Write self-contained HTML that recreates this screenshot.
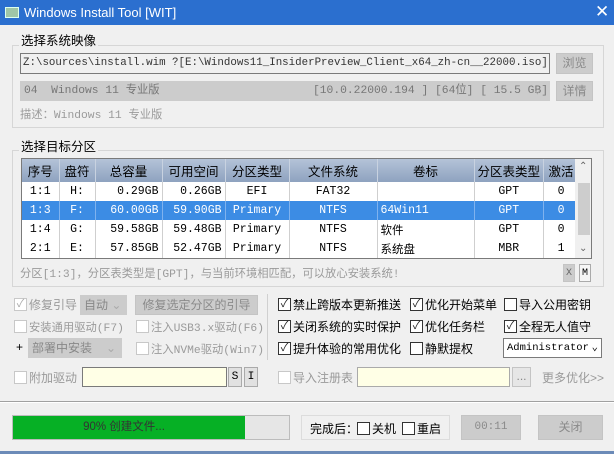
<!DOCTYPE html>
<html><head><meta charset="utf-8"><style>
*{box-sizing:border-box;margin:0;padding:0}
body{width:614px;height:454px;overflow:hidden;background:#f0f0f0;font-family:"Liberation Sans","Noto Sans CJK SC",sans-serif;font-size:12px;color:#000;position:relative}
.a{position:absolute;white-space:nowrap}
.title{left:0;top:0;width:614px;height:25px;background:#2b6fcf;color:#fff;font-size:13px;line-height:25px;padding-left:24px}
.grp{border:1px solid #d6d6d6;}
.lbl{background:#f0f0f0;padding:0 2px;font-size:12.5px}
.mono{font-family:"Liberation Mono","Noto Sans CJK SC",monospace;font-size:11.3px}
.btn{background:#cccccc;border:1px solid #c4c4c4;color:#8a8a8a;text-align:center}
.cb{width:13px;height:13px;border:1px solid #333;background:#fff;font-size:11px;line-height:11px;text-align:center;color:#222}
.cbd{border-color:#c8c8c8;color:#aaa}
.gray{color:#9a9a9a}
table{border-collapse:collapse;font-family:"Liberation Mono","Noto Sans CJK SC",monospace;font-size:11.5px}
td,th{height:19px;border-right:1px solid #cfcfcf;padding:0 3px}
th{height:23px;background:linear-gradient(#b4c3d8,#8ea2bf);font-family:"Liberation Sans","Noto Sans CJK SC",sans-serif;font-weight:normal;font-size:12.5px;border-right:1px solid #c8d2e0}
tr.sel td{background:#3c8ce4;color:#fff;border-right-color:#7fb2ee}
.r{text-align:right}.c{text-align:center}
</style></head><body>
<div class="a title">Windows Install Tool [WIT]</div>
<div class="a" style="left:5px;top:7px;width:14px;height:11px;background:#9fc6a8;border:1px solid #dfe;"></div>
<div class="a" style="left:595px;top:2px;color:#fff;font-size:17px">✕</div>

<div class="a grp" style="left:12px;top:45px;width:592px;height:83px"></div>
<div class="a lbl" style="left:19px;top:30px">选择系统映像</div>
<div class="a mono" style="left:20px;top:53px;width:530px;height:21px;border:1px solid #7a7a7a;background:#f0f0f0;line-height:19px;padding-left:2px;color:#333;font-size:10.8px;overflow:hidden">Z:\sources\install.wim ?[E:\Windows11_InsiderPreview_Client_x64_zh-cn__22000.iso]</div>
<div class="a btn" style="left:556px;top:53px;width:37px;height:21px;line-height:19px">浏览</div>
<div class="a mono" style="left:20px;top:81px;width:530px;height:20px;background:#cccccc;line-height:20px;padding-left:4px;color:#777">04&nbsp; Windows 11 专业版<span style="position:absolute;left:293px">[10.0.22000.194 ] [64位] [ 15.5 GB]</span><span style="position:absolute;left:514px;color:#aaa">⌄</span></div>
<div class="a btn" style="left:556px;top:81px;width:37px;height:20px;line-height:18px">详情</div>
<div class="a mono gray" style="left:20px;top:106px">描述：Windows 11 专业版</div>

<div class="a grp" style="left:12px;top:150px;width:592px;height:137px"></div>
<div class="a lbl" style="left:19px;top:136px">选择目标分区</div>
<div class="a" style="left:21px;top:158px;width:571px;height:101px;border:1px solid #7a7a7a;background:#fff;overflow:hidden">
<table>
<tr><th style="width:37px">序号</th><th style="width:36px">盘符</th><th style="width:67px">总容量</th><th style="width:63px">可用空间</th><th style="width:64px">分区类型</th><th style="width:88px">文件系统</th><th style="width:97px">卷标</th><th style="width:66px">分区表类型</th><th style="width:35px">激活</th></tr>
<tr><td class="c">1:1</td><td class="c">H:</td><td class="r">0.29GB</td><td class="r">0.26GB</td><td class="c">EFI</td><td class="c">FAT32</td><td></td><td class="c">GPT</td><td class="c">0</td></tr>
<tr class="sel"><td class="c">1:3</td><td class="c">F:</td><td class="r">60.00GB</td><td class="r">59.90GB</td><td class="c">Primary</td><td class="c">NTFS</td><td>64Win11</td><td class="c">GPT</td><td class="c">0</td></tr>
<tr><td class="c">1:4</td><td class="c">G:</td><td class="r">59.58GB</td><td class="r">59.48GB</td><td class="c">Primary</td><td class="c">NTFS</td><td>软件</td><td class="c">GPT</td><td class="c">0</td></tr>
<tr><td class="c">2:1</td><td class="c">E:</td><td class="r">57.85GB</td><td class="r">52.47GB</td><td class="c">Primary</td><td class="c">NTFS</td><td>系统盘</td><td class="c">MBR</td><td class="c">1</td></tr>
</table>
<div class="a" style="left:553px;top:0;width:17px;height:99px;background:#f0f0f0"></div>
<div class="a" style="left:556px;top:24px;width:12px;height:52px;background:#cdcdcd"></div>
<div class="a" style="left:557px;top:2px;font-size:10px;color:#666">⌃</div>
<div class="a" style="left:557px;top:84px;font-size:10px;color:#666">⌄</div>
</div>
<div class="a mono gray" style="left:20px;top:265px">分区[1:3]，分区表类型是[GPT]，与当前环境相匹配，可以放心安装系统!</div>
<div class="a btn mono" style="left:563px;top:264px;width:12px;height:18px;line-height:17px;font-size:10px;color:#666">X</div>
<div class="a mono" style="left:579px;top:264px;width:12px;height:18px;line-height:17px;font-size:10px;border:1px solid #aaa;background:#f6f6f6;text-align:center">M</div>

<div class="a cb cbd" style="left:14px;top:298px">✓</div><div class="a gray" style="left:29px;top:296px">修复引导</div>
<div class="a" style="left:80px;top:295px;width:47px;height:20px;background:#cccccc;color:#888;line-height:20px;padding-left:4px">自动 <span style="color:#aaa">⌄</span></div>
<div class="a btn" style="left:135px;top:295px;width:123px;height:20px;line-height:18px">修复选定分区的引导</div>
<div class="a cb cbd" style="left:14px;top:320px"></div><div class="a gray mono" style="left:29px;top:319px">安装通用驱动(F7)</div>
<div class="a cb cbd" style="left:136px;top:320px"></div><div class="a gray mono" style="left:151px;top:319px">注入USB3.x驱动(F6)</div>
<div class="a" style="left:16px;top:340px">+</div>
<div class="a" style="left:28px;top:338px;width:94px;height:20px;background:#cccccc;color:#888;line-height:20px;padding-left:4px">部署中安装 <span style="position:absolute;right:6px;color:#aaa">⌄</span></div>
<div class="a cb cbd" style="left:136px;top:342px"></div><div class="a gray mono" style="left:151px;top:341px">注入NVMe驱动(Win7)</div>
<div class="a" style="left:267px;top:294px;width:1px;height:66px;background:#d0d0d0"></div>

<div class="a cb" style="left:278px;top:298px">✓</div><div class="a" style="left:293px;top:296px">禁止跨版本更新推送</div>
<div class="a cb" style="left:410px;top:298px">✓</div><div class="a" style="left:425px;top:296px">优化开始菜单</div>
<div class="a cb" style="left:504px;top:298px"></div><div class="a" style="left:519px;top:296px">导入公用密钥</div>
<div class="a cb" style="left:278px;top:320px">✓</div><div class="a" style="left:293px;top:318px">关闭系统的实时保护</div>
<div class="a cb" style="left:410px;top:320px">✓</div><div class="a" style="left:425px;top:318px">优化任务栏</div>
<div class="a cb" style="left:504px;top:320px">✓</div><div class="a" style="left:519px;top:318px">全程无人值守</div>
<div class="a cb" style="left:278px;top:342px">✓</div><div class="a" style="left:293px;top:340px">提升体验的常用优化</div>
<div class="a cb" style="left:410px;top:342px"></div><div class="a" style="left:425px;top:340px">静默提权</div>
<div class="a mono" style="left:503px;top:338px;width:99px;height:20px;border:1px solid #7a7a7a;background:#fff;line-height:18px;padding-left:3px;font-size:10.5px">Administrator <span style="position:absolute;right:3px">⌄</span></div>

<div class="a cb cbd" style="left:14px;top:371px"></div><div class="a gray" style="left:29px;top:369px">附加驱动</div>
<div class="a" style="left:82px;top:367px;width:145px;height:20px;border:1px solid #7a7a7a;background:#ffffe6"></div>
<div class="a mono" style="left:228px;top:367px;width:14px;height:20px;border:1px solid #aaa;background:#e1e1e1;text-align:center;line-height:18px">S</div>
<div class="a mono" style="left:244px;top:367px;width:14px;height:20px;border:1px solid #aaa;background:#e1e1e1;text-align:center;line-height:18px">I</div>
<div class="a cb cbd" style="left:278px;top:371px"></div><div class="a gray" style="left:293px;top:369px">导入注册表</div>
<div class="a" style="left:357px;top:367px;width:153px;height:20px;border:1px solid #aaa;background:#ffffe6"></div>
<div class="a" style="left:512px;top:367px;width:19px;height:20px;border:1px solid #c4c4c4;background:#e6e6e6;color:#888;text-align:center;line-height:16px">...</div>
<div class="a gray" style="left:542px;top:369px">更多优化&gt;&gt;</div>

<div class="a" style="left:0;top:401px;width:614px;height:1px;background:#a0a0a0"></div>
<div class="a" style="left:0;top:402px;width:614px;height:1px;background:#fff"></div>

<div class="a" style="left:12px;top:415px;width:278px;height:25px;border:1px solid #bcbcbc;background:#e6e6e6"></div>
<div class="a" style="left:13px;top:416px;width:232px;height:23px;background:#06b025"></div>
<div class="a" style="left:12px;top:415px;width:278px;height:25px;line-height:25px;text-align:center;font-size:11.5px;color:#333;padding-right:54px">90% 创建文件...</div>
<div class="a" style="left:301px;top:415px;width:149px;height:25px;border:1px solid #dcdcdc"></div>
<div class="a" style="left:310px;top:420px">完成后：</div>
<div class="a cb" style="left:357px;top:422px"></div><div class="a" style="left:372px;top:420px">关机</div>
<div class="a cb" style="left:402px;top:422px"></div><div class="a" style="left:417px;top:420px">重启</div>
<div class="a btn" style="left:461px;top:415px;width:60px;height:25px;line-height:23px;font-family:'Liberation Mono',monospace;font-size:11px">00:11</div>
<div class="a btn" style="left:538px;top:415px;width:65px;height:25px;line-height:23px">关闭</div>
<div class="a" style="left:0;top:451px;width:614px;height:3px;background:#6c8bb8"></div>
</body></html>
